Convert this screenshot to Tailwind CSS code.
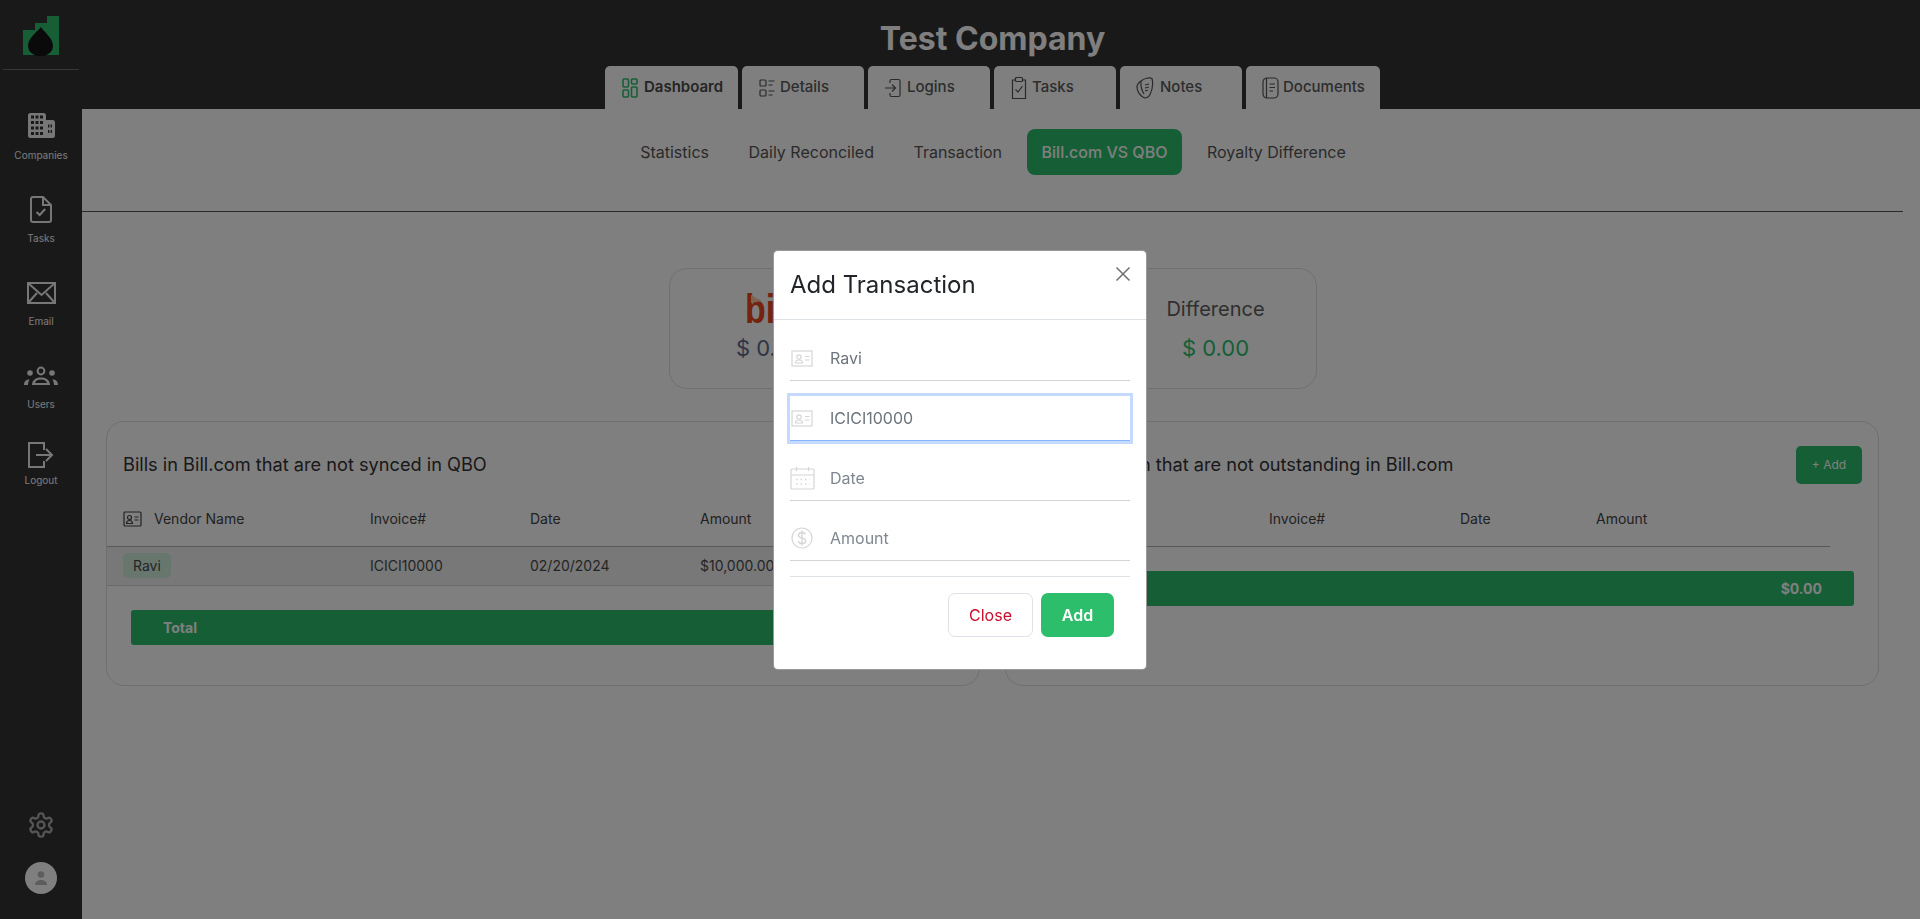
<!DOCTYPE html>
<html lang="en">
<head>
<meta charset="utf-8">
<title>Test Company</title>
<script src="https://cdn.jsdelivr.net/npm/@tailwindcss/browser@4"></script>
</head>
<body class="bg-white font-['Inter',sans-serif] overflow-hidden">
<div class="flex h-[919px] w-[1920px]">

  <!-- Sidebar -->
  <aside class="w-[82px] shrink-0 bg-[#333333] flex flex-col items-center text-white">
    <div class="w-[76px] h-[70px] border-b border-[#6e6e6e] flex justify-center pt-[16px]">
      <svg width="36" height="40" viewBox="0 0 36 40">
        <path fill="#2dbe6c" d="M0 14h12V7h12V0h12v39H0z"/>
        <path fill="#151515" d="M18 11c3 5 12 11 12 19a12 10 0 0 1-25 0c0-8 9-14 13-19z"/>
      </svg>
    </div>
    <nav class="flex flex-col items-center w-full mt-[43px]">
      <a class="h-[83px] w-full flex flex-col items-center">
        <svg width="27" height="25" viewBox="0 0 27 25">
          <path fill="#eeeeee" d="M2.500 0h13a2.500 2.500 0 0 1 2.500 2.500V7h6.500A2.500 2.500 0 0 1 27 9.500v13a2.500 2.500 0 0 1-2.500 2.500h-22A2.500 2.500 0 0 1 0 22.500v-20A2.500 2.500 0 0 1 2.500 0z"/>
          <path fill="none" stroke="#333333" stroke-width="3" stroke-dasharray="3 1.500" d="M3 4h12M3 9.500h12M3 15h12M3 20.500h12"/>
          <path fill="none" stroke="#333333" stroke-width="3" d="M20 13h4M20 18.500h4"/>
          <path fill="none" stroke="#eeeeee" stroke-width="1.200" d="M22 11v10"/>
        </svg>
        <span class="mt-[10px] text-[10px] leading-[14px] text-[#f3f3f3]">Companies</span>
      </a>
      <a class="h-[83px] w-full flex flex-col items-center">
        <svg width="22" height="27" viewBox="0 0 22 27" fill="none" stroke="#eeeeee" stroke-width="2">
          <path stroke-linejoin="round" d="M3 1h10l8 8v15a2 2 0 0 1-2 2H3a2 2 0 0 1-2-2V3a2 2 0 0 1 2-2z"/>
          <path d="M13 1v8h8M6.500 16l3.200 3 5.500-6"/>
        </svg>
        <span class="mt-[8px] text-[10px] leading-[14px] text-[#f3f3f3]">Tasks</span>
      </a>
      <a class="h-[83px] w-full flex flex-col items-center pt-[3px]">
        <svg width="29" height="22" viewBox="0 0 29 22" fill="none" stroke="#eeeeee" stroke-width="2">
          <rect x="1" y="1" width="27" height="20"/>
          <path d="M1 1l13.500 12L28 1M1 21l9-10M28 21l-9-10"/>
        </svg>
        <span class="mt-[10px] text-[10px] leading-[14px] text-[#f3f3f3]">Email</span>
      </a>
      <a class="h-[80px] w-full flex flex-col items-center pt-[4px]">
        <svg width="34" height="20" viewBox="0 0 34 20" fill="#eeeeee">
          <circle cx="17" cy="5" r="3.400" fill="none" stroke="#eeeeee" stroke-width="2"/>
          <circle cx="6" cy="7" r="2.800"/><circle cx="28" cy="7" r="2.800"/>
          <path d="M8 19c0-5 4-7.500 9-7.500s9 2.500 9 7.500zm3-2h12c-.5-2.500-3-3.500-6-3.500s-5.500 1-6 3.500z" fill-rule="evenodd"/>
          <path d="M0 19c0-3.500 2-5.500 5.500-5.500-.8 1.500-1.500 3.500-1.500 5.500zM34 19c0-3.500-2-5.500-5.500-5.500.8 1.500 1.500 3.500 1.500 5.500z"/>
        </svg>
        <span class="mt-[11px] text-[10px] leading-[14px] text-[#f3f3f3]">Users</span>
      </a>
      <a class="w-full flex flex-col items-center">
        <svg width="26" height="26" viewBox="0 0 26 26" fill="none" stroke="#eeeeee" stroke-width="2">
          <path d="M16 8V1H1v24h15v-6M8 13h16M18 7l6 6-6 6"/>
        </svg>
        <span class="mt-[5px] text-[10px] leading-[14px] text-[#f3f3f3]">Logout</span>
      </a>
    </nav>
    <div class="mt-auto flex flex-col items-center pb-[25px]">
      <svg width="28" height="28" viewBox="0 0 24 24" fill="none" stroke="#aaaaaa" stroke-width="2" stroke-linecap="round" stroke-linejoin="round">
        <path d="M12.220 2h-.44a2 2 0 0 0-2 2v.18a2 2 0 0 1-1 1.730l-.43.25a2 2 0 0 1-2 0l-.15-.08a2 2 0 0 0-2.730.73l-.22.38a2 2 0 0 0 .73 2.730l.15.1a2 2 0 0 1 1 1.720v.51a2 2 0 0 1-1 1.740l-.15.09a2 2 0 0 0-.73 2.730l.22.38a2 2 0 0 0 2.730.73l.15-.08a2 2 0 0 1 2 0l.43.25a2 2 0 0 1 1 1.730V20a2 2 0 0 0 2 2h.44a2 2 0 0 0 2-2v-.18a2 2 0 0 1 1-1.730l.43-.25a2 2 0 0 1 2 0l.15.08a2 2 0 0 0 2.730-.73l.22-.39a2 2 0 0 0-.73-2.730l-.15-.08a2 2 0 0 1-1-1.740v-.5a2 2 0 0 1 1-1.740l.15-.09a2 2 0 0 0 .73-2.730l-.22-.38a2 2 0 0 0-2.730-.73l-.15.08a2 2 0 0 1-2 0l-.43-.25a2 2 0 0 1-1-1.730V4a2 2 0 0 0-2-2z"/>
        <circle cx="12" cy="12" r="3"/>
      </svg>
      <div class="mt-[23px] w-[32px] h-[32px] rounded-full bg-white flex items-center justify-center">
        <svg width="16" height="14" viewBox="0 0 16 14" fill="#bbbbbb"><circle cx="8" cy="3.500" r="3.300"/><path d="M2 14c0-3.500 3-5 6-5s6 1.500 6 5z"/></svg>
      </div>
    </div>
  </aside>

  <!-- Main column -->
  <div class="flex-1 min-w-0 flex flex-col">
    <header class="h-[109px] bg-[#333333] pr-[17px] pt-[19px] flex flex-col items-center">
      <h1 class="text-[32px] leading-[40px] font-bold text-white">Test Company</h1>
      <div class="mt-[7px] flex gap-[4px] text-[15px] font-medium text-[#5a5a5a]">
        <a class="w-[133px] h-[43px] bg-white rounded-t-[5px] pl-[17px] flex items-center gap-[6px] text-[#4a4a4a] font-semibold">
          <svg width="16" height="20" viewBox="0 0 16 20" fill="none" stroke="#2dbe6c" stroke-width="1.600"><rect x="1" y="1" width="5.500" height="8" rx="1"/><rect x="9.500" y="1" width="5.500" height="5" rx="1"/><rect x="1" y="12" width="5.500" height="7" rx="1"/><rect x="9.500" y="9" width="5.500" height="10" rx="1"/></svg>
          Dashboard
        </a>
        <a class="w-[122px] h-[43px] bg-white rounded-t-[5px] pl-[17px] flex items-center gap-[5px]">
          <svg width="16" height="20" viewBox="0 0 16 20" fill="none" stroke="#555555" stroke-width="1.200"><rect x="1" y="2" width="6" height="6" rx="1"/><rect x="1" y="12" width="6" height="6" rx="1"/><path d="M9.500 3h6M9.500 7h4M9.500 13h6M9.500 17h4"/></svg>
          Details
        </a>
        <a class="w-[122px] h-[43px] bg-white rounded-t-[5px] pl-[17px] flex items-center gap-[6px]">
          <svg width="16" height="20" viewBox="0 0 16 20" fill="none" stroke="#555555" stroke-width="1.200"><path d="M5 5V3a1.500 1.500 0 0 1 1.500-1.500h7A1.500 1.500 0 0 1 15 3v14a1.500 1.500 0 0 1-1.500 1.500h-7A1.500 1.500 0 0 1 5 17v-2M0 10h10M7 6.500l3.500 3.500L7 13.500"/></svg>
          Logins
        </a>
        <a class="w-[122px] h-[43px] bg-white rounded-t-[5px] pl-[17px] flex items-center gap-[5px]">
          <svg width="16" height="24" viewBox="0 0 16 24" fill="none" stroke="#555555" stroke-width="1.200"><path d="M4.500 4H1.500v18.500h13V4h-3"/><rect x="4.500" y="1.500" width="7" height="4" rx="1"/><path d="M4.500 13.500l2.500 2.500 4.500-6"/></svg>
          Tasks
        </a>
        <a class="w-[122px] h-[43px] bg-white rounded-t-[5px] pl-[16px] flex items-center gap-[6px]">
          <svg width="18" height="24" viewBox="0 0 18 24" fill="none" stroke="#555555" stroke-width="1.200"><path d="M5 5c3-2.500 8-4 11-2.500 1 4 .5 11-2 16-1.500 3-4.500 4-6.500 3C4 20 1 15 1 11c0-2.500 2-4.500 4-6z"/><path d="M5 5c-.5 4 .5 9 3 13M9 9l4-1M9 12l4-1M9 15l3-1"/></svg>
          Notes
        </a>
        <a class="w-[134px] h-[43px] bg-white rounded-t-[5px] pl-[16px] flex items-center gap-[4px]">
          <svg width="17" height="24" viewBox="0 0 17 24" fill="none" stroke="#555555" stroke-width="1.200"><rect x="1" y="2" width="15" height="20" rx="4"/><path d="M4.500 2v20M7.500 8h5.500M7.500 11.500h5.500M7.500 15h3.500"/></svg>
          Documents
        </a>
      </div>
    </header>

    <main class="flex-1 pr-[17px]">
      <!-- Sub navigation -->
      <div class="h-[103px] border-b border-[#555555] pt-[20px] pl-[1px] flex justify-center gap-[9.5px] text-[16px] text-[#555555]">
        <a class="h-[46px] px-[15px] flex items-center">Statistics</a>
        <a class="h-[46px] px-[15px] flex items-center">Daily Reconciled</a>
        <a class="h-[46px] px-[15px] flex items-center">Transaction</a>
        <a class="h-[46px] px-[15px] flex items-center rounded-[8px] bg-[#2dbe6c] text-white font-medium">Bill.com VS QBO</a>
        <a class="h-[46px] px-[15px] flex items-center">Royalty Difference</a>
      </div>

      <!-- Totals card -->
      <div class="mx-auto mt-[56px] w-[648px] h-[121px] border border-[#dedede] rounded-[18px] pt-[21px] grid grid-cols-[200px_1fr_200px]">
        <div class="flex flex-col">
          <div class="relative h-[38px] ml-[75px] flex items-center origin-left scale-x-[0.85] text-[#e8491d] font-['Liberation_Sans',sans-serif] font-bold text-[40px] leading-none">
            bill
            <svg class="absolute left-[7px] top-[5px]" width="13" height="8" viewBox="0 0 13 8"><path fill="#ffc4a0" d="M0 0l13 6-13 2z"/></svg>
          </div>
          <div class="h-[40px] flex items-center justify-center text-[22px] text-[#5c6a8c]">$ 0.00</div>
        </div>
        <div class="flex flex-col items-center">
          <div class="h-[38px] flex items-center text-[20px] text-[#5e5e5e]">QBO</div>
          <div class="h-[40px] flex items-center text-[22px] text-[#5c6a8c]">$ 0.00</div>
        </div>
        <div class="flex flex-col items-center">
          <div class="h-[38px] flex items-center text-[20px] text-[#5e5e5e]">Difference</div>
          <div class="h-[40px] flex items-center text-[22px] text-[#2dbe6c]">$ 0.00</div>
        </div>
      </div>

      <!-- Comparison panels -->
      <div class="mt-[32px] px-[24px] grid grid-cols-2 gap-[25px]">
        <section class="h-[265px] border border-[#dedede] rounded-[18px]">
          <div class="h-[38px] mt-[24px] pl-[16px] flex items-center text-[18.2px] text-[#333333]">Bills in Bill.com that are not synced in QBO</div>
          <div class="mt-[9px] h-[54px] mr-[48px] border-b border-[#b0b0b0] pl-[16px] pb-[2px] flex items-center text-[14px] text-[#444444]">
            <div class="w-[247px] flex items-center gap-[12px]">
              <svg width="19" height="16" viewBox="0 0 19 16" fill="none" stroke="#444444" stroke-width="1.200"><rect x="1" y="1" width="17" height="14" rx="1"/><circle cx="6.500" cy="6.500" r="2"/><path d="M3.500 12.500c0-2 1.500-3 3-3s3 1 3 3zM11.500 6h4M11.500 9h4"/></svg>
              Vendor Name
            </div>
            <div class="w-[160px]">Invoice#</div>
            <div class="w-[170px]">Date</div>
            <div>Amount</div>
          </div>
          <div class="h-[39px] bg-[#f0f0f0] border-b border-[#d4d4d4] pl-[16px] pb-[2px] flex items-center text-[14px] text-[#4b4b4b]">
            <div class="w-[247px]"><span class="inline-flex items-center h-[25px] px-[10px] rounded-[5px] bg-[#cfeedd]">Ravi</span></div>
            <div class="w-[160px]">ICICI10000</div>
            <div class="w-[170px]">02/20/2024</div>
            <div>$10,000.00</div>
          </div>
          <div class="mt-[24px] mx-[24px] h-[35px] rounded-[3px] bg-[#2dbe6c] pl-[32px] flex items-center text-[14px] font-bold text-white">Total</div>
        </section>

        <section class="h-[265px] border border-[#dedede] rounded-[18px]">
          <div class="h-[38px] mt-[24px] pl-[16px] pr-[16px] flex items-center justify-between text-[18.2px] text-[#333333]">
            <span class="-ml-[3px]">QB Transaction that are not outstanding in Bill.com</span>
            <a class="w-[66px] h-[38px] rounded-[5px] bg-[#2dbe6c] text-white text-[12px] flex items-center justify-center">+ Add</a>
          </div>
          <div class="mt-[9px] h-[54px] mr-[48px] border-b border-[#b0b0b0] pl-[16px] pb-[2px] flex items-center text-[14px] text-[#444444]">
            <div class="w-[247px]">Vendor Name</div>
            <div class="w-[191px]">Invoice#</div>
            <div class="w-[136px]">Date</div>
            <div>Amount</div>
          </div>
          <div class="mt-[24px] mx-[24px] h-[35px] rounded-[3px] bg-[#2dbe6c] px-[32px] flex items-center justify-between text-[14px] font-bold text-white">
            <span>Total</span><span>$0.00</span>
          </div>
        </section>
      </div>
    </main>
  </div>
</div>

<!-- Modal overlay -->
<div class="fixed inset-0 bg-black/50 flex justify-center">
  <div class="mt-[250px] w-[374px] h-[420px] bg-white border border-black/40 rounded-[5px] self-start">
    <div class="h-[69px] border-b border-[#dee2e6] pl-[16px] pr-[15px] flex items-start justify-between">
      <h2 class="mt-[17px] text-[24px] leading-[34px] text-[#212529]">Add Transaction</h2>
      <svg class="mt-[15px]" width="16" height="16" viewBox="0 0 16 16" fill="none" stroke="#6f6f6f" stroke-width="1.500"><path d="M1.500 1.500l13 13M14.500 1.500l-13 13"/></svg>
    </div>
    <div class="px-[16px] pt-[16px]">
      <label class="h-[45px] mb-[15px] border-b border-[#d4d4d4] flex items-center">
        <svg class="w-[40px] shrink-0" width="40" height="17" viewBox="0 0 40 17" fill="none" stroke="#d6d6d6" stroke-width="1.200"><rect x="2" y="1" width="20" height="15"/><circle cx="9" cy="7" r="2.200"/><path d="M5.500 13c0-2 1.500-3 3.500-3s3.500 1 3.500 3zM15 6.500h4.500M15 10h4.500"/></svg>
        <input class="flex-1 min-w-0 outline-none text-[16px] text-[#6c757d]" value="Ravi">
      </label>
      <label class="h-[45px] mb-[15px] border-b border-[#86b7fe] ring-[3px] ring-[#c5dafc] flex items-center">
        <svg class="w-[40px] shrink-0" width="40" height="17" viewBox="0 0 40 17" fill="none" stroke="#d6d6d6" stroke-width="1.200"><rect x="2" y="1" width="20" height="15"/><circle cx="9" cy="7" r="2.200"/><path d="M5.500 13c0-2 1.500-3 3.500-3s3.500 1 3.500 3zM15 6.500h4.500M15 10h4.500"/></svg>
        <input class="flex-1 min-w-0 outline-none text-[16px] text-[#6c757d]" value="ICICI10000">
      </label>
      <label class="h-[45px] mb-[15px] border-b border-[#d4d4d4] flex items-center">
        <svg class="w-[40px] shrink-0" width="40" height="24" viewBox="0 0 40 24" fill="none" stroke="#d6d6d6" stroke-width="1.200"><rect x="1" y="3" width="23" height="20" rx="1"/><path d="M1 9h23M6.500 1v4M18.500 1v4"/><path stroke-width="1.500" stroke-dasharray="1.500 3" d="M6 13.500h14M6 18h14"/></svg>
        <input class="flex-1 min-w-0 outline-none text-[16px] placeholder:text-[#7f8790]" placeholder="Date">
      </label>
      <label class="h-[45px] border-b border-[#d4d4d4] flex items-center">
        <svg class="w-[40px] shrink-0" width="40" height="22" viewBox="0 0 40 22" fill="none" stroke="#d6d6d6" stroke-width="1.200"><circle cx="12" cy="11" r="10"/><path stroke-width="1.400" d="M15.500 7.500c-.5-1.500-2-2-3.500-2-2 0-3.500 1-3.500 2.800 0 3.800 7.200 1.800 7.200 5.400 0 1.800-1.700 2.800-3.700 2.800-1.800 0-3.300-.8-3.700-2.300M12 3.500v15"/></svg>
        <input class="flex-1 min-w-0 outline-none text-[16px] placeholder:text-[#7f8790]" placeholder="Amount">
      </label>
      <div class="mt-[15px] border-t border-[#dee2e6] pt-[16px] pr-[16px] flex justify-end gap-[8px]">
        <button class="w-[85px] h-[44px] rounded-[7px] border border-[#dee2e6] text-[16px] text-[#c8102e]">Close</button>
        <button class="w-[73px] h-[44px] rounded-[7px] bg-[#2dbe6c] text-[16px] font-semibold text-white">Add</button>
      </div>
    </div>
  </div>
</div>
</body>
</html>
